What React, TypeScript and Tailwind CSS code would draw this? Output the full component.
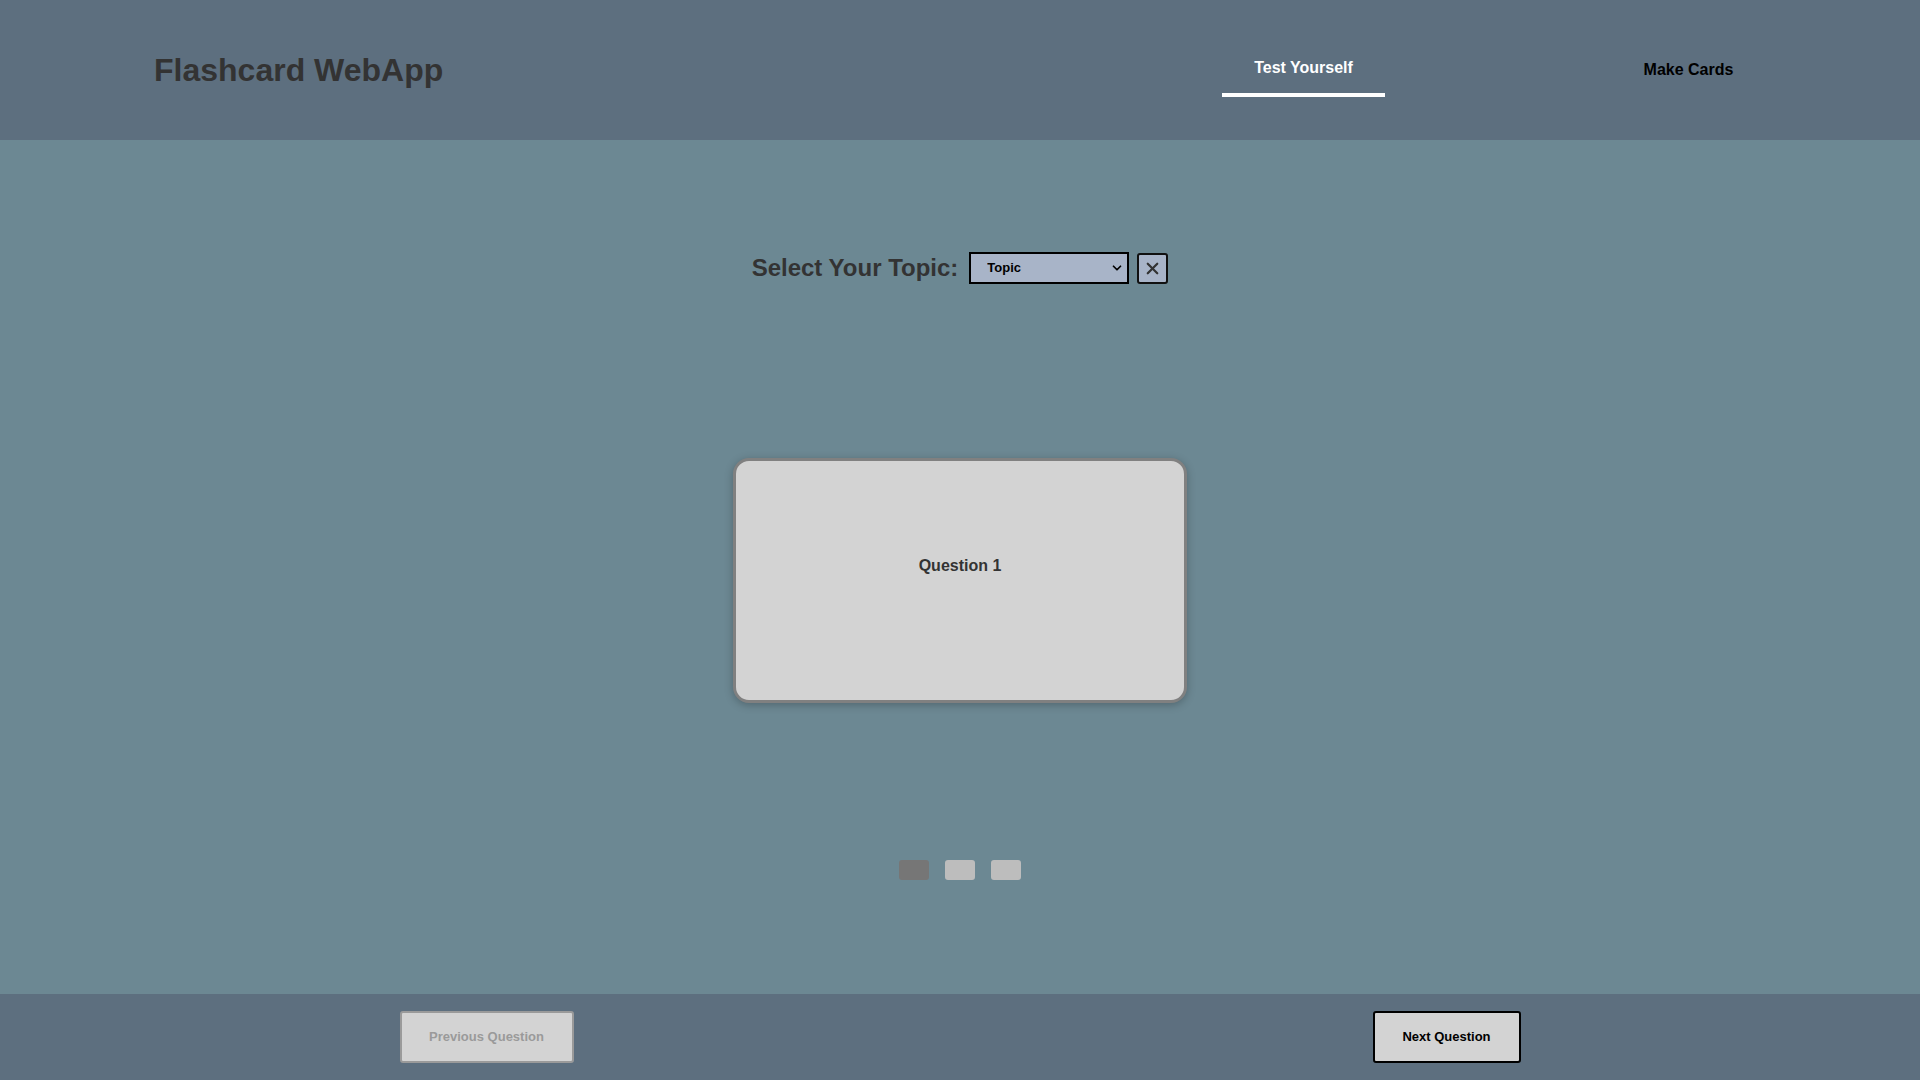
import React, { useState } from "react";
import { ChevronDown, X } from "lucide-react";

const font = { fontFamily: '"Liberation Sans", Arial, sans-serif' };

const questions = ["Question 1", "Question 2", "Question 3"];

const App = () => {
  const [current, setCurrent] = useState(0);

  return (
    <div className="flex min-h-screen flex-col bg-[#6c8893]" style={font}>
      {/* Header */}
      <header className="flex h-[140px] items-center bg-[#5d6f7f] pl-[154px] pr-[150px]">
        <h1 className="text-[32px] font-bold text-[#333333]">Flashcard WebApp</h1>
        <nav className="ml-auto flex h-full items-start">
          <div className="flex w-[163px] flex-col items-center pt-[58px]">
            <span className="text-[16px] font-bold leading-[20px] text-white">Test Yourself</span>
            <div className="mt-[15px] h-[4px] w-full bg-white" />
          </div>
          <div className="ml-[222px] flex w-[163px] flex-col items-center pt-[60px]">
            <span className="text-[16px] font-bold leading-[20px] text-black">Make Cards</span>
          </div>
        </nav>
      </header>

      {/* Main */}
      <main className="flex flex-1 flex-col items-center pt-[112px]">
        <div className="flex h-[32px] items-center">
          <label className="text-[24px] font-bold text-[#333333]">Select Your Topic:</label>
          <div className="relative ml-[11px]">
            <select
              className="h-[32px] w-[160px] appearance-none border-2 border-black bg-[#a8b4c8] pl-[16px] text-[13px] font-bold text-black"
              defaultValue="topic"
            >
              <option value="topic">Topic</option>
            </select>
            <ChevronDown
              size={14}
              strokeWidth={3}
              className="pointer-events-none absolute right-[5px] top-[9px] text-black"
            />
          </div>
          <button className="ml-[8px] flex h-[31px] w-[31px] items-center justify-center rounded-[3px] border-2 border-[#111] bg-[#a8b4c8] text-[#333]">
            <X size={19} strokeWidth={2.8} />
          </button>
        </div>

        <div className="mt-[174px] flex h-[245px] w-[454px] items-start justify-center rounded-[16px] border-[3px] border-[#808080] bg-[#d3d3d3] pt-[93px] shadow-[0_2px_8px_rgba(0,0,0,0.25)]">
          <span className="text-[16px] font-bold text-[#333333]">{questions[current]}</span>
        </div>

        <div className="mt-[157px] flex gap-[16px]">
          {questions.map((q, i) => (
            <button
              key={q}
              onClick={() => setCurrent(i)}
              className={`h-[20px] w-[30px] rounded-[3px] ${i === current ? "bg-[#767676]" : "bg-[#bdbdbd]"}`}
            />
          ))}
        </div>
      </main>

      {/* Footer */}
      <footer className="flex h-[86px] items-center justify-around bg-[#5d6f7f]">
        <button
          disabled={current === 0}
          onClick={() => setCurrent((c) => Math.max(0, c - 1))}
          className="h-[52px] w-[174px] rounded-[3px] border-2 border-[#9a9a9a] bg-[#d3d3d3] text-[13px] font-bold text-[#9a9a9a]"
        >
          Previous Question
        </button>
        <button
          onClick={() => setCurrent((c) => Math.min(questions.length - 1, c + 1))}
          className="h-[52px] w-[148px] rounded-[3px] border-2 border-black bg-[#d3d3d3] text-[13px] font-bold text-black"
        >
          Next Question
        </button>
      </footer>
    </div>
  );
};

export default App;
